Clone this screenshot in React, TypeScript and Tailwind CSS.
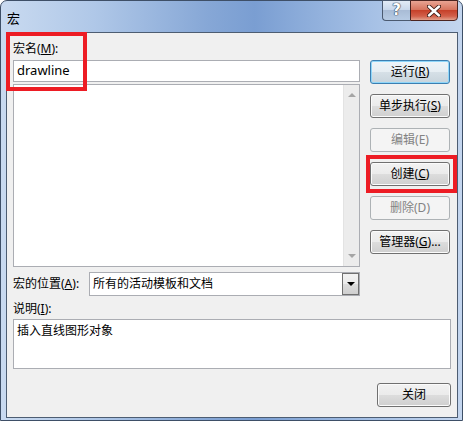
import React from "react"

const font = { fontFamily: '"Noto Sans", "Noto Sans CJK SC", sans-serif' }

const Btn = ({ children, state = "normal", className = "" }: { children: React.ReactNode; state?: "normal" | "default" | "disabled"; className?: string }) => {
  const look =
    state === "disabled"
      ? "border-[#adb2b5] bg-[#f4f4f4] text-[#838383]"
      : state === "default"
      ? "border-[#3c7fb1] bg-[linear-gradient(to_bottom,#eef4f8_0%,#e6eef3_50%,#d6e0e7_50%,#c8d4dc_100%)] shadow-[inset_0_0_0_1px_#8fd6f9] text-black"
      : "border-[#707070] bg-[linear-gradient(to_bottom,#f2f2f2_0%,#ebebeb_50%,#dddddd_50%,#cfcfcf_100%)] shadow-[inset_0_0_0_1px_#fbfbfb] text-black"
  return (
    <div className={`h-[24px] rounded-[3px] border flex items-center justify-center text-[12px] leading-none ${look} ${className}`}>
      {children}
    </div>
  )
}

const App = () => {
  return (
    <div className="w-[463px] h-[421px] bg-white" style={font}>
      <div className="relative w-[463px] h-[421px] rounded-t-[7px] border border-[#3e4f67] bg-[linear-gradient(to_right,#c9daf0_0%,#b0c8e8_20%,#86a7d6_45%,#7a9ed2_55%,#a5c0e5_80%,#c4d6ef_100%)] flex flex-col">
        {/* title bar */}
        <div className="h-[31px] flex items-start">
          <div className="pl-[6px] pt-[9px] text-[13px] leading-[16px] text-black">宏</div>
          <div className="ml-auto mr-[4px] flex h-[21px] -mt-px">
            <div className="w-[28px] h-full rounded-bl-[4px] border border-[#4b5a70] border-r-0 bg-[linear-gradient(to_bottom,#e2ebf6_0%,#c7d6ea_50%,#a9bcd6_50%,#b7cbe4_100%)] flex items-center justify-center">
              <span className="text-[15px] font-bold leading-none text-white [text-shadow:0_0_1px_#2c3a4e,0_0_1px_#2c3a4e,0_0_1px_#2c3a4e]" style={{ fontFamily: '"DejaVu Sans", sans-serif' }}>?</span>
            </div>
            <div className="w-[48px] h-full rounded-br-[4px] border border-[#4b2420] bg-[linear-gradient(to_bottom,#e8a493_0%,#d7755f_45%,#c6412a_50%,#d2604a_80%,#e2a08c_100%)] flex items-center justify-center">
              <svg width="14" height="12" viewBox="0 0 14 12">
                <path d="M2 1.5 L12 10.5 M12 1.5 L2 10.5" stroke="#3a1a14" strokeWidth="4.2" strokeLinecap="round" />
                <path d="M2 1.5 L12 10.5 M12 1.5 L2 10.5" stroke="#ffffff" strokeWidth="2.4" strokeLinecap="round" />
              </svg>
            </div>
          </div>
        </div>

        {/* client area */}
        <div className="ml-[5px] w-[452px] h-[386px] border border-[#4d5d72] bg-[#f0f0f0] text-[12px] text-black flex flex-col pl-[6px] pr-[6px]">
          <div className="flex">
            {/* left column */}
            <div className="w-[347px] flex flex-col">
              <div className="pt-[8px] h-[27px] leading-[16px]">宏名(<u>M</u>):</div>
              <div className="h-[22px] border border-[#abadb3] bg-white flex items-center pl-[3px] text-[13px]">drawline</div>
              <div className="mt-[2px] h-[183px] border border-[#abadb3] bg-white flex justify-end">
                <div className="w-[16px] h-full bg-[#ececec] border-l border-[#e3e3e3] flex flex-col items-center justify-between py-[8px]">
                  <svg width="8" height="4" viewBox="0 0 8 4"><path d="M0 4 L4 0 L8 4 Z" fill="#a5a5a5" /></svg>
                  <svg width="8" height="4" viewBox="0 0 8 4"><path d="M0 0 L8 0 L4 4 Z" fill="#a5a5a5" /></svg>
                </div>
              </div>
            </div>
            {/* right column */}
            <div className="ml-[10px] w-[80px] pt-[27px] flex flex-col gap-[10px]">
              <Btn state="default">运行(<u>R</u>)</Btn>
              <Btn>单步执行(<u>S</u>)</Btn>
              <Btn state="disabled">编辑(E)</Btn>
              <Btn>创建(<u>C</u>)</Btn>
              <Btn state="disabled">删除(D)</Btn>
              <Btn>管理器(<u>G</u>)...</Btn>
            </div>
          </div>

          {/* location row */}
          <div className="mt-[5px] flex items-center h-[24px]">
            <div className="w-[76px]">宏的位置(<u>A</u>):</div>
            <div className="w-[271px] h-[24px] border border-[#abadb3] bg-white flex items-center">
              <div className="flex-1 pl-[3px]">所有的活动模板和文档</div>
              <div className="w-[17px] h-full border border-[#707070] bg-[linear-gradient(to_bottom,#f2f2f2_0%,#ebebeb_50%,#dddddd_50%,#cfcfcf_100%)] flex items-center justify-center">
                <svg width="8" height="4" viewBox="0 0 8 4"><path d="M0 0 L8 0 L4 4 Z" fill="#000" /></svg>
              </div>
            </div>
          </div>

          <div className="mt-[5px] h-[16px] leading-[16px]">说明(<u>I</u>):</div>
          <div className="mt-[2px] w-[438px] h-[50px] border border-[#abadb3] bg-white pl-[3px] pt-[3px] leading-[16px]">插入直线图形对象</div>

          <div className="mt-[14px] flex justify-end">
            <Btn className="w-[74px]">关闭</Btn>
          </div>
        </div>

        {/* red annotation boxes */}
        <div className="absolute left-[5px] top-[31px] w-[81px] h-[59px] border-[4px] border-[#ed1c24]" />
        <div className="absolute left-[365px] top-[154px] w-[91px] h-[38px] border-[4px] border-[#ed1c24]" />
      </div>
    </div>
  )
}

export default App
